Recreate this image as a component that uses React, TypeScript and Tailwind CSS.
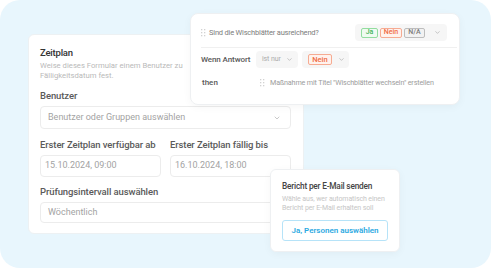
import React from "react";
import { ChevronDown } from "lucide-react";

const font = { fontFamily: "Roboto, 'Liberation Sans', sans-serif" };

const Dots: React.FC = () => (
  <svg width="5" height="8" viewBox="0 0 5 8" className="shrink-0">
    {[0, 3, 6].map((y) => (
      <g key={y}>
        <rect x="0" y={y} width="1.3" height="1.3" fill="#d2d2d2" />
        <rect x="3" y={y} width="1.3" height="1.3" fill="#d2d2d2" />
      </g>
    ))}
  </svg>
);

const Label: React.FC<{ text: string }> = ({ text }) => (
  <div className="text-[9.5px] tracking-[-0.1px] font-medium text-[#5a5a5a] leading-[12px] mb-[4px] whitespace-nowrap">{text}</div>
);

const Input: React.FC<{ value: string; chevron?: boolean; cls: string }> = ({ value, chevron, cls }) => (
  <div className={`flex items-center justify-between border border-[#ececec] rounded-[4px] pr-[9px] ${cls}`}>
    <span className="text-[9px] text-[#a3a3a3] whitespace-nowrap">{value}</span>
    {chevron && <ChevronDown size={8} strokeWidth={1.6} className="text-[#999]" />}
  </div>
);

const Badge: React.FC<{ text: string; tone: "green" | "red" | "gray"; w: string; big?: boolean }> = ({ text, tone, w, big }) => {
  const cls =
    tone === "green"
      ? "border-[#92dd9f] bg-[#effbf1] text-[#45b35a]"
      : tone === "red"
      ? "border-[#f6ab92] bg-[#fff2ed] text-[#f06c44]"
      : "border-[#bdbdbd] bg-[#f2f2f2] text-[#7a7a7a]";
  return (
    <span
      className={`inline-flex items-center justify-center border rounded-[2px] font-medium leading-none ${w} ${
        big ? "h-[11px] text-[7.5px]" : "h-[10px] text-[7px]"
      } ${cls}`}
    >
      {text}
    </span>
  );
};

export default function App() {
  return (
    <div className="bg-white w-[491px] h-[268px]" style={font}>
      <div className="relative w-[491px] h-[268px] rounded-[20px] bg-[#e8f6fd] overflow-hidden pt-[34px] pl-[28px]">
        {/* main card */}
        <div className="w-[276px] h-[200px] bg-white rounded-[6px] border border-[#edf1f3] pl-[11px] pr-[12px] pt-[11px]">
          <div className="text-[9.5px] tracking-[-0.2px] font-medium text-[#333] leading-[14px]">Zeitplan</div>
          <div className="text-[7.7px] text-[#b9b9b9] leading-[10px] mt-[1px] whitespace-nowrap">
            Weise dieses Formular einem Benutzer zu
            <br />
            Fälligkeitsdatum fest.
          </div>
          <div className="mt-[9px]">
            <Label text="Benutzer" />
            <Input value="Benutzer oder Gruppen auswählen" chevron cls="h-[23px] pl-[7px]" />
          </div>
          <div className="grid grid-cols-2 gap-[9px] mt-[10px]">
            <div>
              <Label text="Erster Zeitplan verfügbar ab" />
              <Input value="15.10.2024, 09:00" cls="h-[22px] pl-[4px]" />
            </div>
            <div>
              <Label text="Erster Zeitplan fällig bis" />
              <Input value="16.10.2024, 18:00" cls="h-[22px] pl-[4px]" />
            </div>
          </div>
          <div className="mt-[9px]">
            <Label text="Prüfungsintervall auswählen" />
            <Input value="Wöchentlich" cls="h-[21px] pl-[7px]" />
          </div>
        </div>

        {/* rule card */}
        <div className="absolute left-[190px] top-[13px] w-[270px] h-[92px] bg-white rounded-[8px] border border-[#eef0f2] shadow-[0_2px_8px_rgba(0,0,0,0.04)] pl-[10px] pr-[2px] pt-[10px]">
          <div className="flex items-center justify-between pb-[6px] border-b border-[#f0f0f0]">
            <div className="flex items-center gap-[3px]">
              <Dots />
              <span className="text-[7.5px] tracking-[-0.2px] text-[#7d7d7d] whitespace-nowrap">Sind die Wischblätter ausreichend?</span>
            </div>
            <div className="flex items-center bg-[#f6f6f6] rounded-[4px] h-[17px] w-[92px] pl-[6px] mr-[10px]">
              <div className="flex items-center gap-[2px]">
                <Badge text="Ja" tone="green" w="w-[17px]" />
                <Badge text="Nein" tone="red" w="w-[22px]" />
                <Badge text="N/A" tone="gray" w="w-[21px]" />
              </div>
              <ChevronDown size={7} strokeWidth={1.8} className="text-[#999] ml-[9px]" />
            </div>
          </div>
          <div className="flex items-center mt-[3px]">
            <span className="text-[8px] tracking-[-0.1px] font-medium text-[#595959] w-[55px] whitespace-nowrap">Wenn Antwort</span>
            <div className="flex items-center bg-[#f6f6f6] rounded-[4px] h-[17px] w-[42px] pl-[6px] gap-[5px]">
              <span className="text-[7px] tracking-[-0.1px] text-[#ababab] whitespace-nowrap">ist nur</span>
              <ChevronDown size={7} strokeWidth={1.8} className="text-[#999]" />
            </div>
            <div className="flex items-center bg-[#f6f6f6] rounded-[4px] h-[17px] w-[47px] pl-[6px] gap-[6px] ml-[4px]">
              <Badge text="Nein" tone="red" w="w-[24px]" big />
              <ChevronDown size={7} strokeWidth={1.8} className="text-[#999]" />
            </div>
          </div>
          <div className="flex items-center mt-[9px] h-[12px]">
            <span className="text-[8px] font-medium text-[#595959] w-[59px] pl-[1px]">then</span>
            <Dots />
            <span className="text-[7.2px] tracking-[-0.15px] text-[#9c9c9c] ml-[5px] whitespace-nowrap">
              Maßnahme mit Titel "Wischblätter wechseln" erstellen
            </span>
          </div>
        </div>

        {/* email card */}
        <div className="absolute left-[270px] top-[169px] w-[130px] h-[83px] bg-white rounded-[6px] border border-[#eef0f2] shadow-[0_2px_8px_rgba(0,0,0,0.04)] pl-[11px] pt-[10px]">
          <div className="text-[8.3px] tracking-[-0.2px] font-medium text-[#444] leading-[12px] whitespace-nowrap">Bericht per E-Mail senden</div>
          <div className="text-[7px] tracking-[-0.1px] text-[#c6c6c6] leading-[9px] mt-[3px] whitespace-nowrap">
            Wähle aus, wer automatisch einen
            <br />
            Bericht per E-Mail erhalten soll
          </div>
          <div className="mt-[7px] w-[106px] h-[21px] border border-[#b6e3f8] rounded-[3px] flex items-center justify-center">
            <span className="text-[8px] font-semibold text-[#2ba9e1] whitespace-nowrap">Ja, Personen auswählen</span>
          </div>
        </div>
      </div>
    </div>
  );
}
